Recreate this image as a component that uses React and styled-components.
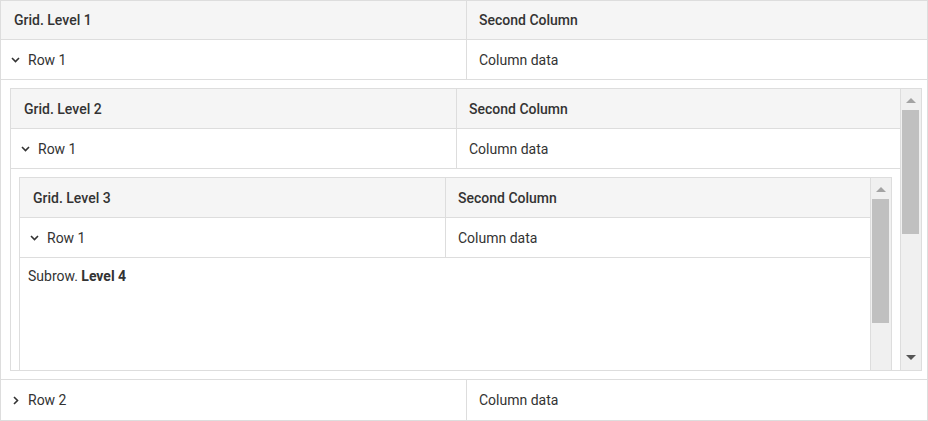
import styled, { createGlobalStyle } from 'styled-components';

const GlobalStyle = createGlobalStyle`
	body {
		margin: 0;
		font-family: Roboto, "Liberation Sans", sans-serif;
		font-size: 14px;
		color: #333;
		background: #fff;
	}
`;

const Frame = styled.div`
	display: flex;
	box-sizing: border-box;
	width: ${(p) => (p.$width ? `${p.$width}px` : 'auto')};
	height: ${(p) => p.$height}px;
	border: 1px solid #ddd;
	background: #fff;
	overflow: hidden;
`;

const Body = styled.div`
	flex: 1;
	min-width: 0;
	display: flex;
	flex-direction: column;
	overflow: hidden;
`;

const Row = styled.div`
	flex-shrink: 0;
	display: grid;
	grid-template-columns: ${(p) => p.$split}px 1fr;
	box-sizing: border-box;
	height: ${(p) => p.$height || 40}px;
	border-bottom: ${(p) => (p.$last ? 'none' : '1px solid #ddd')};
	background: ${(p) => (p.$header ? '#f5f5f5' : '#fff')};
	font-weight: ${(p) => (p.$header ? 500 : 400)};
`;

const Cell = styled.div`
	display: flex;
	align-items: center;
	box-sizing: border-box;
	padding-left: ${(p) => p.$pad || 12}px;
	white-space: nowrap;
	overflow: hidden;

	&:first-child {
		border-right: 1px solid #ddd;
	}
`;

const DetailRow = styled.div`
	flex-shrink: 0;
	box-sizing: border-box;
	height: ${(p) => (p.$height ? `${p.$height}px` : 'auto')};
	padding: 8px ${(p) => p.$right}px 8px ${(p) => p.$left}px;
	border-bottom: 1px solid #ddd;
`;

const Subrow = styled.div`
	padding: 10px 8px;
	line-height: 16px;

	b {
		font-weight: 700;
	}
`;

const Chevron = styled.svg`
	flex-shrink: 0;
	width: 9px;
	height: 9px;
	margin-right: 8px;
`;

const Track = styled.div`
	flex-shrink: 0;
	width: 21px;
	box-sizing: border-box;
	border-left: 1px solid #ddd;
	background: #f0f0f0;
	display: flex;
	flex-direction: column;
	align-items: center;
`;

const Arrow = styled.span`
	width: 0;
	height: 0;
	border-left: 5px solid transparent;
	border-right: 5px solid transparent;
	${(p) =>
		p.$down
			? 'border-top: 5px solid #555; margin: auto 0 10px;'
			: 'border-bottom: 5px solid #a3a3a3; margin-top: 9px;'}
`;

const Thumb = styled.div`
	flex-shrink: 0;
	align-self: flex-start;
	width: 17px;
	height: ${(p) => p.$size}px;
	margin: 7px 0 0 1px;
	background: #c0c0c0;
`;

const Toggle = ({ open }) => (
	<Chevron viewBox="0 0 9 9">
		<polyline
			points={open ? '1,3 4.5,6.5 8,3' : '3,1 6.5,4.5 3,8'}
			fill="none"
			stroke="#333"
			strokeWidth="1.6"
		/>
	</Chevron>
);

const Scrollbar = () => (
	<Track>
		<Arrow />
		<Thumb $size={124} />
		<Arrow $down />
	</Track>
);

const DataRow = ({ split, label, open, last }) => (
	<Row $split={split} $last={last}>
		<Cell $pad={10}>
			<Toggle open={open} />
			{label}
		</Cell>
		<Cell>Column data</Cell>
	</Row>
);

const Header = ({ split, title, height }) => (
	<Row $header $split={split} $height={height}>
		<Cell $pad={13}>{title}</Cell>
		<Cell>Second Column</Cell>
	</Row>
);

const LevelThree = () => (
	<Frame $height={283}>
		<Body>
			<Header split={426} title="Grid. Level 3" />
			<DataRow split={426} label="Row 1" open />
			<Subrow>
				Subrow. <b>Level 4</b>
			</Subrow>
		</Body>
		<Scrollbar />
	</Frame>
);

const LevelTwo = () => (
	<Frame $height={283}>
		<Body>
			<Header split={446} title="Grid. Level 2" />
			<DataRow split={446} label="Row 1" open />
			<DetailRow $left={8} $right={8}>
				<LevelThree />
			</DetailRow>
		</Body>
		<Scrollbar />
	</Frame>
);

export default function App() {
	return (
		<>
			<GlobalStyle />
			<Frame $width={928} $height={421}>
				<Body>
					<Header split={466} title="Grid. Level 1" height={39} />
					<DataRow split={466} label="Row 1" open />
					<DetailRow $height={300} $left={9} $right={5}>
						<LevelTwo />
					</DetailRow>
					<DataRow split={466} label="Row 2" last />
				</Body>
			</Frame>
		</>
	);
}
